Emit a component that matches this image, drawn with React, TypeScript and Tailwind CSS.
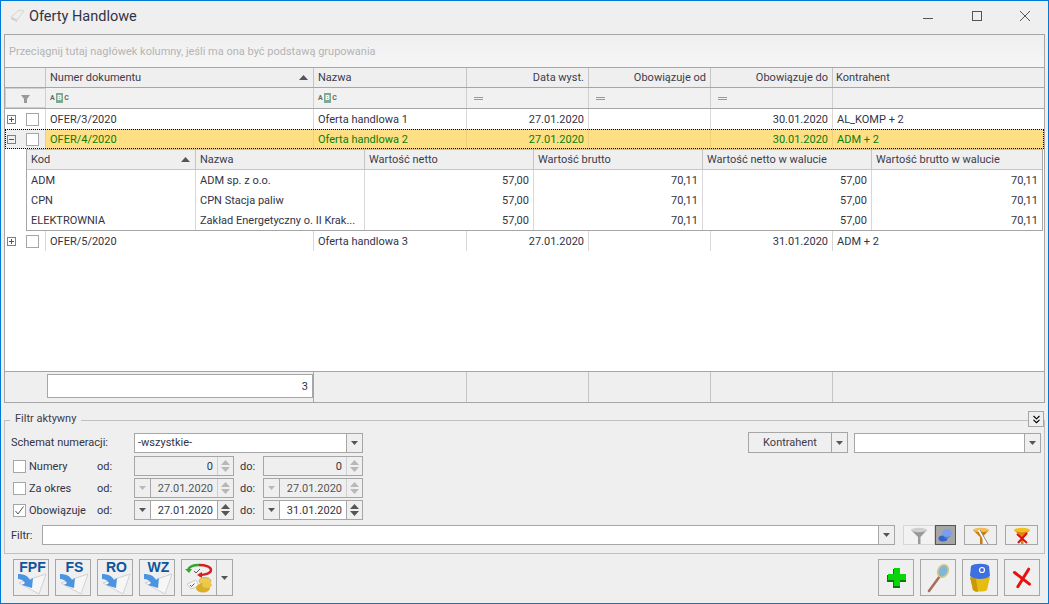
import React from 'react';
import { ChevronsDown } from 'lucide-react';

const cols = ['w-[41px]', 'w-[268px]', 'w-[153px]', 'w-[122px]', 'w-[122px]', 'w-[122px]', 'flex-1'];

const Tri = ({ up, dim, big }: { up?: boolean; dim?: boolean; big?: boolean }) => (
    <svg width={big ? 9 : 7} height={big ? 5 : 4} viewBox="0 0 9 5" preserveAspectRatio="none" className={dim ? 'text-[#b8b8b8]' : 'text-[#555]'}>
        <path d={up ? 'M4.5 0 9 5H0z' : 'M0 0h9L4.5 5z'} fill="currentColor" />
    </svg>
);

const Expander = ({ open }: { open?: boolean }) => (
    <span className="flex h-[9px] w-[9px] items-center justify-center border border-[#808080] bg-transparent">
        <span className="relative block h-px w-[5px] bg-[#555]">
            {!open && <span className="absolute left-[2px] top-[-2px] h-[5px] w-px bg-[#555]" />}
        </span>
    </span>
);

const Box = ({ checked }: { checked?: boolean }) => (
    <span className="flex h-[13px] w-[13px] shrink-0 items-center justify-center border border-[#a6a6a6] bg-white">
        {checked && (
            <svg width="11" height="11" viewBox="0 0 11 11">
                <path d="M1.5 6 4 9l5.5-7.5" fill="none" stroke="#555" strokeWidth="1" />
            </svg>
        )}
    </span>
);

const AbcIcon = () => (
    <span className="flex items-center gap-px text-[7px] leading-[10px] font-bold text-[#666]">
        <span>A</span>
        <span className="bg-[#7fa896] px-[1.5px] text-white">B</span>
        <span>C</span>
    </span>
);

const rows = [
    { no: 'OFER/3/2020', name: 'Oferta handlowa 1', date: '27.01.2020', to: '30.01.2020', who: 'AL_KOMP + 2' },
    { no: 'OFER/4/2020', name: 'Oferta handlowa 2', date: '27.01.2020', to: '30.01.2020', who: 'ADM + 2', open: true },
];

const MainRow = ({ r }: { r: { no: string; name: string; date: string; to: string; who: string; open?: boolean } }) => {
    const cell = `flex h-full items-center border-r ${r.open ? 'border-[#ecd07c]' : 'border-[#d8d8d8]'} px-[4px]`;
    return (
        <div className={`flex h-[20px] shrink-0 ${r.open ? 'bg-[#ffdf84] text-[#0a7d0a] outline-1 -outline-offset-1 outline-dotted outline-black' : 'bg-white text-[#333344]'}`}>
            <div className={`${cols[0]} flex items-center gap-[10px] border-r ${r.open ? 'border-[#ecd07c] bg-[#efefef]' : 'border-[#d8d8d8]'} pl-[2px]`}>
                <Expander open={r.open} />
                <Box />
            </div>
            <div className={`${cols[1]} ${cell}`}>{r.no}</div>
            <div className={`${cols[2]} ${cell}`}>{r.name}</div>
            <div className={`${cols[3]} ${cell} justify-end`}>{r.date}</div>
            <div className={`${cols[4]} ${cell}`} />
            <div className={`${cols[5]} ${cell} justify-end`}>{r.to}</div>
            <div className="flex flex-1 items-center px-[4px]">{r.who}</div>
        </div>
    );
};

const subHeads = [
    { label: 'Kod', w: 'w-[169px] justify-between pr-[5px]' },
    { label: 'Nazwa', w: 'w-[169px]' },
    { label: 'Wartość netto', w: 'w-[169px]' },
    { label: 'Wartość brutto', w: 'w-[169px]' },
    { label: 'Wartość netto w walucie', w: 'w-[169px]' },
    { label: 'Wartość brutto w walucie', w: 'flex-1' },
];
const subRows = [
    ['ADM', 'ADM sp. z o.o.'],
    ['CPN', 'CPN Stacja paliw'],
    ['ELEKTROWNIA', 'Zakład Energetyczny o. II Krak...'],
];

const Spin = ({ dim }: { dim?: boolean }) => (
    <span className={`flex h-full w-[16px] flex-col items-center justify-center gap-[2px] border-l ${dim ? 'border-[#d0d0d0]' : 'border-[#a6a6a6]'}`}>
        <Tri up big dim={dim} />
        <Tri big dim={dim} />
    </span>
);

const DateField = ({ value, dim }: { value: string; dim?: boolean }) => (
    <span className={`flex h-[20px] w-[100px] items-center border border-[#a6a6a6] ${dim ? 'bg-[#efefef] text-[#555]' : 'bg-white text-[#333344]'}`}>
        <span className="flex h-full w-[16px] shrink-0 items-center justify-center border-r border-[#a6a6a6] bg-[#efefef]">
            <Tri dim={dim} />
        </span>
        <span className="flex-1 pr-[4px] text-right">{value}</span>
        <span className="h-full bg-[#efefef]"><Spin dim={dim} /></span>
    </span>
);

const NumField = () => (
    <span className="flex h-[20px] w-[100px] items-center border border-[#a6a6a6] bg-[#efefef] text-[#333344]">
        <span className="flex-1 pr-[4px] text-right">0</span>
        <Spin dim />
    </span>
);

const FilterRow = ({ label, checked, children }: { label: string; checked?: boolean; children: React.ReactNode }) => (
    <div className="flex h-[20px] items-center">
        <span className="ml-[2px] mr-[3px]"><Box checked={checked} /></span>
        <span className="w-[68px]">{label}</span>
        <span className="w-[37px]">od:</span>
        {children}
    </div>
);

const ToolBtn = ({ children }: { children: React.ReactNode }) => (
    <span className="flex h-[37px] w-[36px] items-center justify-center border border-[#a6a6a6]">{children}</span>
);

const DocIcon = ({ code }: { code: string }) => (
    <span className="relative block h-[35px] w-[34px]">
        <svg width="34" height="35" viewBox="0 0 34 35" className="absolute inset-0">
            <path d="M5 23 32 14l-7 20z" fill="#f6f6f6" stroke="#d2d2d2" />
            <path d="M4 14c6 0 10 2 12 6l3-2-1 10-10-3 3-2c-2-3-4-4-7-4z" fill="#4a94e0" />
        </svg>
        <span className="absolute top-0 right-0 left-[3px] text-center text-[14px] leading-[14px] font-bold text-[#0f559b] [font-family:'Liberation_Sans',sans-serif]">{code}</span>
    </span>
);

const SmallBtn = ({ children, className = '' }: { children: React.ReactNode; className?: string }) => (
    <span className={`flex h-[20px] items-center justify-center border ${className}`}>{children}</span>
);

const Funnel = ({ fill, stem, cross, wand }: { fill: string; stem: string; cross?: boolean; wand?: boolean }) => (
    <svg width="18" height="17" viewBox="0 0 18 17">
        <path d="M1 3 8 10v7h2.5V10L17 3z" fill={stem} />
        <ellipse cx="9" cy="3" rx="8" ry="2.2" fill={fill} />
        {cross && <path d="M4 7l10 9M14 6 5 16" stroke="#e01010" strokeWidth="2" />}
        {wand && <path d="M7 3l8 14" stroke="#fff" strokeWidth="2.4" />}
        {wand && <path d="M8 3l8 14" stroke="#555" strokeWidth="0.7" />}
    </svg>
);

export default function App() {
    return (
        <div className="flex h-[604px] w-[1049px] flex-col border border-[#0078d7] bg-[#efefef] pl-[3px] pr-[3px] pb-[2px] text-[11px] leading-none text-[#333344] [font-family:'Roboto','Liberation_Sans',sans-serif]">
            {/* title bar */}
            <div className="flex h-[33px] shrink-0 items-center pb-[4px]">
                <svg width="15" height="15" viewBox="0 0 15 15" className="ml-[6px] mr-[4px]">
                    <path d="M1 9 9 2l5 1-7 9z" fill="#eeeeee" stroke="#d6d6d6" />
                    <path d="M1 9l6 3v2l-6-3z" fill="#d0d0d0" />
                </svg>
                <span className="mt-[3px] text-[14.5px] text-[#333344]">Oferty Handlowe</span>
                <div className="mr-[15px] ml-auto flex items-center">
                    <svg width="10" height="10" viewBox="0 0 10 10"><path d="M0 7.5h10" stroke="#555" /></svg>
                    <svg width="10" height="10" viewBox="0 0 10 10" className="ml-[39px]"><rect x="0.5" y="0.5" width="9" height="9" fill="none" stroke="#555" /></svg>
                    <svg width="10" height="10" viewBox="0 0 10 10" className="ml-[38px]"><path d="M0 0l10 10M10 0 0 10" stroke="#555" /></svg>
                </div>
            </div>

            {/* grid */}
            <div className="flex h-[369px] shrink-0 flex-col border border-[#a6a6a6] bg-white">
                <div className="flex h-[33px] shrink-0 items-center border-b border-[#a6a6a6] bg-gradient-to-b from-[#efefef] to-[#f6f6f6] pl-[4px] text-[#b4b4b4]">
                    Przeciągnij tutaj nagłówek kolumny, jeśli ma ona być podstawą grupowania
                </div>
                <div className="flex h-[20px] shrink-0 border-b border-[#a6a6a6] bg-[#efefef] text-[#3c3c4c]">
                    <div className={`${cols[0]} border-r border-[#c4c4c4]`} />
                    <div className={`${cols[1]} flex items-center justify-between border-r border-[#c4c4c4] pl-[4px] pr-[5px]`}>Numer dokumentu<Tri up big /></div>
                    <div className={`${cols[2]} flex items-center border-r border-[#c4c4c4] px-[4px]`}>Nazwa</div>
                    <div className={`${cols[3]} flex items-center justify-end border-r border-[#c4c4c4] px-[4px]`}>Data wyst.</div>
                    <div className={`${cols[4]} flex items-center justify-end border-r border-[#c4c4c4] px-[4px]`}>Obowiązuje od</div>
                    <div className={`${cols[5]} flex items-center justify-end border-r border-[#c4c4c4] px-[4px]`}>Obowiązuje do</div>
                    <div className="flex flex-1 items-center px-[3px]">Kontrahent</div>
                </div>
                <div className="flex h-[21px] shrink-0 border-b border-[#a6a6a6] bg-[#f1f1f1] text-[#888]">
                    <div className={`${cols[0]} flex items-center justify-center border border-[#d0d0d0]`}>
                        <svg width="9" height="9" viewBox="0 0 9 9"><path d="M0 1h9L6 5v4H3V5z" fill="#9a9a9a" /></svg>
                    </div>
                    <div className={`${cols[1]} flex items-center border-r border-[#d0d0d0] pl-[4px]`}><AbcIcon /></div>
                    <div className={`${cols[2]} flex items-center border-r border-[#d0d0d0] pl-[4px]`}><AbcIcon /></div>
                    {[3, 4, 5].map((i) => (
                        <div key={i} className={`${cols[i]} flex items-center border-r border-[#d0d0d0] pl-[7px]`}>
                            <span className="h-[3px] w-[9px] border-y border-[#999]" />
                        </div>
                    ))}
                    <div className="flex-1" />
                </div>
                {rows.map((r) => <MainRow key={r.no} r={r} />)}

                {/* detail grid */}
                <div className="ml-[21px] mr-[1px] flex shrink-0 flex-col border-b border-l border-r border-[#a6a6a6] bg-white">
                    <div className="flex h-[21px] border-y border-[#c4c4c4] bg-[#efefef] text-[#3c3c4c]">
                        {subHeads.map((h, i) => (
                            <div key={h.label} className={`${h.w} flex items-center border-r border-[#c4c4c4] pl-[4px] last:border-r-0`}>
                                {h.label}{i === 0 && <Tri up big />}
                            </div>
                        ))}
                    </div>
                    {subRows.map(([code, name]) => (
                        <div key={code} className="flex h-[20px] text-[#333344]">
                            <div className="flex w-[169px] items-center border-r border-[#d8d8d8] pl-[4px]">{code}</div>
                            <div className="flex w-[169px] items-center border-r border-[#d8d8d8] pl-[4px] whitespace-nowrap">{name}</div>
                            <div className="flex w-[169px] items-center justify-end border-r border-[#d8d8d8] pr-[4px]">57,00</div>
                            <div className="flex w-[169px] items-center justify-end border-r border-[#d8d8d8] pr-[4px]">70,11</div>
                            <div className="flex w-[169px] items-center justify-end border-r border-[#d8d8d8] pr-[4px]">57,00</div>
                            <div className="flex flex-1 items-center justify-end pr-[4px]">70,11</div>
                        </div>
                    ))}
                </div>
                <MainRow r={{ no: 'OFER/5/2020', name: 'Oferta handlowa 3', date: '27.01.2020', to: '31.01.2020', who: 'ADM + 2' }} />
                <div className="flex-1" />

                {/* footer */}
                <div className="flex h-[31px] shrink-0 border-t border-[#a6a6a6] bg-[#efefef]">
                    <div className={cols[0]} />
                    <div className={`${cols[1]} border-r border-[#a6a6a6] pt-[2px] pl-[1px]`}>
                        <div className="flex h-[24px] items-center justify-end border border-[#a6a6a6] bg-white pr-[4px]">3</div>
                    </div>
                    <div className={`${cols[2]} border-r border-[#c4c4c4]`} />
                    <div className={`${cols[3]} border-r border-[#c4c4c4]`} />
                    <div className={`${cols[4]} border-r border-[#c4c4c4]`} />
                    <div className={`${cols[5]} border-r border-[#c4c4c4]`} />
                </div>
            </div>

            {/* filter */}
            <div className="relative mt-[17px] flex h-[134px] shrink-0 flex-col border border-[#c0c0c0] pl-[6px] pr-[3px] pt-[11px]">
                <span className="absolute top-[-8px] left-[5px] bg-[#efefef] px-[5px] text-[#3c3c4c]">Filtr aktywny</span>
                <span className="absolute top-[-10px] right-0 flex h-[16px] w-[16px] items-center justify-center border border-[#a6a6a6] bg-[#efefef] text-black">
                    <ChevronsDown size={13} strokeWidth={2} />
                </span>
                <div className="flex h-[21px] items-center">
                    <span className="w-[123px]">Schemat numeracji:</span>
                    <span className="flex h-[20px] w-[229px] items-center justify-between border border-[#a6a6a6] bg-white pl-[3px]">
                        -wszystkie-
                        <span className="flex h-full w-[16px] items-center justify-center border-l border-[#a6a6a6] bg-[#efefef]"><Tri /></span>
                    </span>
                    <span className="ml-auto flex h-[21px] w-[100px] items-center border border-[#a6a6a6] text-[#3c3c4c]">
                        <span className="flex-1 text-center">Kontrahent</span>
                        <span className="flex h-full w-[16px] items-center justify-center border-l border-[#a6a6a6]"><Tri /></span>
                    </span>
                    <span className="ml-[6px] flex h-[20px] w-[187px] items-center justify-end border border-[#a6a6a6] bg-white">
                        <span className="flex h-full w-[16px] items-center justify-center border-l border-[#a6a6a6] bg-[#efefef]"><Tri /></span>
                    </span>
                </div>
                <div className="mt-[3px] flex flex-col gap-[2px]">
                    <FilterRow label="Numery"><NumField /><span className="w-[29px] pl-[6px]">do:</span><NumField /></FilterRow>
                    <FilterRow label="Za okres"><DateField value="27.01.2020" dim /><span className="w-[29px] pl-[6px]">do:</span><DateField value="27.01.2020" dim /></FilterRow>
                    <FilterRow label="Obowiązuje" checked><DateField value="27.01.2020" /><span className="w-[29px] pl-[6px]">do:</span><DateField value="31.01.2020" /></FilterRow>
                </div>
                <div className="mt-[5px] flex h-[20px] items-center">
                    <span className="w-[31px]">Filtr:</span>
                    <span className="flex h-[20px] w-[853px] items-center justify-end border border-[#a6a6a6] bg-white">
                        <span className="flex h-full w-[16px] items-center justify-center border-l border-[#a6a6a6] bg-[#efefef]"><Tri /></span>
                    </span>
                    <SmallBtn className="ml-[8px] w-[32px] border-[#d6d6d6] bg-[#f2f2f2]"><Funnel fill="#cfcfcf" stem="#9a9a9a" /></SmallBtn>
                    <SmallBtn className="w-[21px] border-[#555] bg-[#a6a6a6]">
                        <svg width="15" height="15" viewBox="0 0 15 15">
                            <ellipse cx="5" cy="10.5" rx="4.5" ry="3" fill="#3563cc" />
                            <path d="M4 7 8 11l5-3z" fill="#4d78dc" />
                            <ellipse cx="9" cy="5" rx="5" ry="4" fill="#7c9eee" />
                        </svg>
                    </SmallBtn>
                    <SmallBtn className="ml-[8px] w-[33px] border-[#a6a6a6]"><Funnel fill="#f4bc4e" stem="#c67e10" wand /></SmallBtn>
                    <SmallBtn className="ml-[8px] w-[33px] border-[#a6a6a6]"><Funnel fill="#f5c01e" stem="#d88a10" cross /></SmallBtn>
                </div>
            </div>

            {/* toolbar */}
            <div className="mt-[5px] flex flex-1 items-start pl-[9px] pr-[5px]">
                <div className="flex gap-[6px]">
                    {['FPF', 'FS', 'RO', 'WZ'].map((c) => <ToolBtn key={c}><DocIcon code={c} /></ToolBtn>)}
                    <span className="flex h-[37px] w-[52px] items-center border border-[#a6a6a6]">
                        <span className="flex h-full w-[35px] items-center justify-center border-r border-[#a6a6a6]">
                            <svg width="30" height="32" viewBox="0 0 30 32">
                                <path d="M15 3c7 0 12 2 12 5s-5 5-12 5" fill="none" stroke="#d42020" strokeWidth="2.4" />
                                <path d="M15 3C9 3 5 5 4 8" fill="none" stroke="#30a830" strokeWidth="2.4" />
                                <path d="M1 7h7l-3 4z" fill="#30a830" />
                                <path d="M13 13l5-3v6z" fill="#d42020" />
                                <path d="M10 9l2 2 4-4" fill="none" stroke="#333" strokeWidth="0.8" />
                                <path d="M3 22l9-4 3 6-8 3z" fill="#f6f6f6" stroke="#ccc" />
                                <path d="M6 23l1.5 1.5 3-3" fill="none" stroke="#333" strokeWidth="0.8" />
                                <ellipse cx="21" cy="19" rx="6" ry="3.5" fill="#eccb52" stroke="#c8a028" strokeWidth="0.6" />
                                <ellipse cx="19" cy="26" rx="7" ry="4.5" fill="#dcae28" />
                                <ellipse cx="23" cy="23" rx="5" ry="3" fill="#ecc848" />
                            </svg>
                        </span>
                        <span className="flex flex-1 justify-center"><Tri /></span>
                    </span>
                </div>
                <div className="ml-auto flex gap-[6px]">
                    <ToolBtn>
                        <svg width="24" height="24" viewBox="0 0 24 24">
                            <path d="M9 3h7v6h6v7h-6v6H9v-6H3V9h6z" fill="#067a06" />
                            <path d="M10 2h6v6h6v6h-6v6h-6v-6H4V8h6z" fill="#0ad40a" />
                        </svg>
                    </ToolBtn>
                    <ToolBtn>
                        <svg width="26" height="30" viewBox="0 0 26 30">
                            <path d="M15 13 4 28" stroke="#a8705a" strokeWidth="2.6" strokeLinecap="round" />
                            <ellipse cx="18" cy="8" rx="5" ry="6.5" transform="rotate(28 18 8)" fill="#7fb8d4" stroke="#d8c488" strokeWidth="1.6" />
                        </svg>
                    </ToolBtn>
                    <ToolBtn>
                        <svg width="24" height="30" viewBox="0 0 24 30">
                            <path d="M2 14h20l-3 13c-2 2-12 2-14 0z" fill="#e6bc10" />
                            <path d="M2 14l6 2 2 13c-2 0-4-1-5-2z" fill="#c89a08" />
                            <path d="M3 3c3-3 15-3 18 0l1 10c-4 4-16 4-20 0z" fill="#3d6fe0" />
                            <circle cx="14" cy="7" r="2.5" fill="none" stroke="#fff" strokeWidth="1.2" />
                        </svg>
                    </ToolBtn>
                    <ToolBtn>
                        <svg width="20" height="23" viewBox="0 0 24 26">
                            <path d="M3 7l18 14M20 3 7 24" stroke="#e81010" strokeWidth="3.6" strokeLinecap="round" />
                        </svg>
                    </ToolBtn>
                </div>
            </div>
        </div>
    );
}
